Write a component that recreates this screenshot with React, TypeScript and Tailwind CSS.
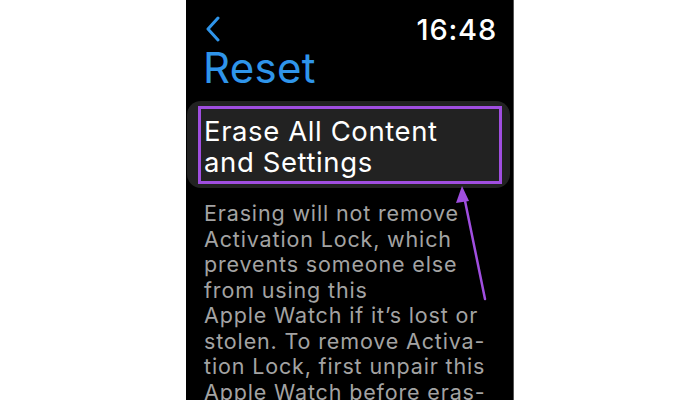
export default function App() {
  const bodyLines = [
    "Erasing will not remove",
    "Activation Lock, which",
    "prevents someone else",
    "from using this",
    "Apple Watch if it\u2019s lost or",
    "stolen. To remove Activa-",
    "tion Lock, first unpair this",
    "Apple Watch before eras-",
    "ing it.",
  ];

  return (
    <div className="w-[700px] h-[400px] bg-white flex justify-center" style={{ fontFamily: "Inter, 'Noto Sans', sans-serif" }}>
      <div className="relative w-[328px] h-[400px] bg-black overflow-hidden border-r border-[#555]">
        {/* status row */}
        <div className="flex items-center justify-between pl-[18px] pr-[16px] pt-[14px] h-[44px]">
          <svg width="16" height="26" viewBox="0 0 16 26" className="ml-[1px]">
            <path d="M13 2 L3 13 L13 24" fill="none" stroke="#2f95ea" strokeWidth="3" strokeLinecap="round" strokeLinejoin="round" />
          </svg>
          <span className="text-white text-[29px] font-medium leading-none tracking-[0.8px]">16:48</span>
        </div>

        <h1 className="pl-[17px] text-[#2f95ea] text-[42px] leading-[48px] font-normal tracking-[0.3px]">Reset</h1>

        {/* highlighted row */}
        <div className="mt-[9px] ml-[1px] mr-[3px] rounded-[14px] bg-[#222222] pl-[11px] pr-[8px] pt-[5px] pb-[4px]">
          <div className="border-[3px] border-[#a04ee0] px-[3px] pt-[7px] pb-[3px] text-white text-[27.5px] leading-[31px] tracking-[0.6px]">
            <div>Erase All Content</div>
            <div>and Settings</div>
          </div>
        </div>

        {/* description */}
        <div className="pl-[18px] pt-[13px] text-[#a3a3a3] text-[21.5px] leading-[25.5px] tracking-[0.85px] whitespace-nowrap">
          {bodyLines.map((l) => (
            <div key={l}>{l}</div>
          ))}
        </div>

        {/* annotation arrow */}
        <svg className="absolute left-0 top-0" width="328" height="400" viewBox="0 0 328 400">
          <line x1="278" y1="196" x2="299" y2="299" stroke="#a04ee0" strokeWidth="2.5" strokeLinecap="round" />
          <polygon points="276,186 270,203 283,201" fill="#a04ee0" />
        </svg>
      </div>
    </div>
  );
}
